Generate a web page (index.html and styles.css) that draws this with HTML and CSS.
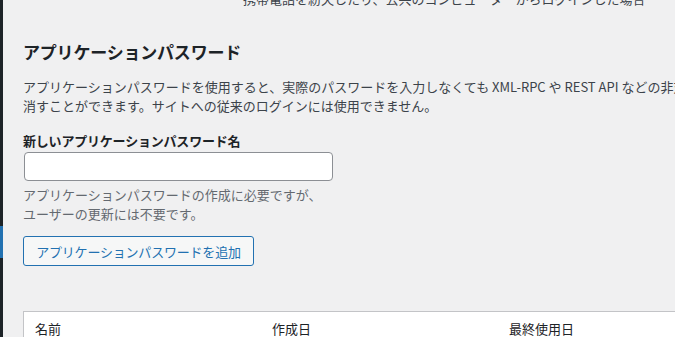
FILE: index.html
```html
<html>
<head>
	<link rel="stylesheet" href="styles.css">
</head>
<body>
<div class="wrap">
	<div class="menu">
		<div class="menu-gap"></div>
		<div class="menu-current"></div>
	</div>
	<div class="content">
		<p class="cut">携帯電話を紛失したり、公共のコンピューターからログインした場合</p>

		<h2>アプリケーションパスワード</h2>
		<p class="intro">アプリケーションパスワードを使用すると、実際のパスワードを入力しなくても XML-RPC や REST API などの非対話型システムでの認証が可能になります。アプリケーションパスワードは簡単に取り<br>消すことができます。サイトへの従来のログインには使用できません。</p>

		<label class="field-label" for="appname">新しいアプリケーションパスワード名</label>
		<input type="text" id="appname" class="field">
		<p class="desc">アプリケーションパスワードの作成に必要ですが、<br>ユーザーの更新には不要です。</p>

		<button class="btn">アプリケーションパスワードを追加</button>

		<div class="list">
			<div class="list-head">
				<span class="col">名前</span>
				<span class="col">作成日</span>
				<span class="col">最終使用日</span>
			</div>
		</div>
	</div>
</div>
</body>
</html>
```

FILE: styles.css
```css
body{
	margin: 0;
	background-color: #f0f0f1;
	font-family: "Noto Sans CJK JP", "Liberation Sans", sans-serif;
	color: #1d2327;
	overflow: hidden;
}
.wrap{
	display: flex;
	height: 337px;
}
.menu{
	width: 3px;
	flex-shrink: 0;
	background-color: #1d2327;
	display: flex;
	flex-direction: column;
}
.menu-gap{height: 226px;}
.menu-current{
	height: 32px;
	background-color: #2271b1;
}
.content{
	padding-left: 20px;
	flex: 1;
	min-width: 0;
	overflow: hidden;
}
.cut{
	margin: -11px 0 0 220px;
	font-size: 13px;
	line-height: 19px;
	color: #3c434a;
	white-space: nowrap;
}
h2{
	margin: 32px 0 0;
	font-size: 17px;
	line-height: 24px;
	font-weight: 700;
	letter-spacing: -0.2px;
}
.intro{
	margin: 13px 0 0;
	font-size: 13px;
	line-height: 19px;
	color: #3c434a;
	white-space: nowrap;
}
.field-label{
	display: block;
	margin-top: 17px;
	font-size: 13px;
	line-height: 18px;
	font-weight: 700;
	letter-spacing: -0.2px;
}
.field{
	display: block;
	margin: 2px 0 0 1px;
	width: 309px;
	height: 29px;
	border: 1px solid #8c8f94;
	border-radius: 4px;
	background: #fff;
	box-sizing: border-box;
}
.desc{
	margin: 4px 0 0;
	font-size: 13px;
	line-height: 19px;
	color: #646970;
}
.btn{
	display: block;
	margin-top: 13px;
	height: 30px;
	width: 231px;
	padding: 0 10px;
	border: 1px solid #2271b1;
	border-radius: 3px;
	background-color: #f6f7f7;
	color: #2271b1;
	font-family: inherit;
	font-size: 13px;
	letter-spacing: -0.2px;
}
.list{
	margin-top: 45px;
	width: 720px;
	background: #fff;
	border: 1px solid #c3c4c7;
	height: 40px;
}
.list-head{
	display: flex;
	padding-top: 7px;
	font-size: 13px;
	line-height: 20px;
}
.col{
	width: 237px;
	padding-left: 11px;
	box-sizing: border-box;
}
```
